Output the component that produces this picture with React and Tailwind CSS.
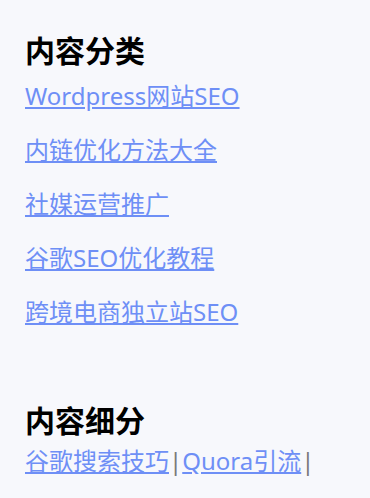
export default function App() {
  const links = ["Wordpress网站SEO", "内链优化方法大全", "社媒运营推广", "谷歌SEO优化教程", "跨境电商独立站SEO"];
  return (
    <div className="min-h-screen bg-[#f7f8fc] px-[25px] pt-[33px] font-['Noto_Sans','Noto_Sans_CJK_SC',sans-serif]">
      <h2 className="text-[30px] leading-[36px] font-bold text-black">内容分类</h2>
      <div className="flex flex-col">
        {links.map((l) => (
          <a key={l} href="#" className="block w-fit text-[24px] leading-[54px] text-[#6e8ff6] underline">
            {l}
          </a>
        ))}
      </div>
      <h2 className="mt-[64px] text-[30px] leading-[36px] font-bold text-black">内容细分</h2>
      <div className="text-[24px] leading-[44px]">
        <a href="#" className="text-[#6e8ff6] underline">谷歌搜索技巧</a>
        <span className="text-[#7a7a7a]">|</span>
        <a href="#" className="text-[#6e8ff6] underline">Quora引流</a>
        <span className="text-[#7a7a7a]">|</span>
      </div>
    </div>
  );
}
